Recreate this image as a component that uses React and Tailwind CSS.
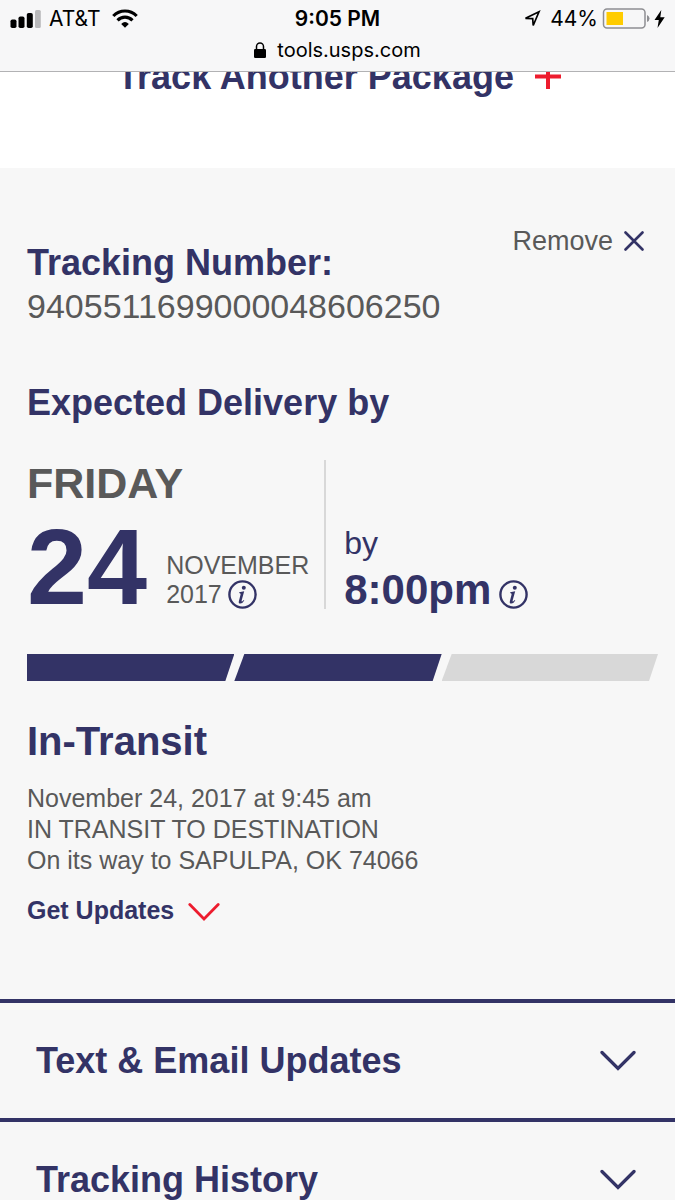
import React from "react";

function Chevron({ className, size = "large" }) {
  return size === "large" ? (
    <svg width="36" height="22" viewBox="0 0 36 22" fill="none" stroke="currentColor" strokeWidth="3.3" strokeLinecap="round" className={className} aria-hidden="true">
      <path d="M2 2.5 18 18.500 34 2.5" />
    </svg>
  ) : (
    <svg width="32" height="20" viewBox="0 0 32 20" fill="none" stroke="currentColor" strokeWidth="2.8" strokeLinecap="round" className={className} aria-hidden="true">
      <path d="M1.800 2.500 16 17 30.200 2.500" />
    </svg>
  );
}

function InfoButton({ label }) {
  return (
    <button type="button" aria-label={label} className="block shrink-0 text-[#333366]">
      <svg width="29" height="29" viewBox="0 0 29 29" aria-hidden="true">
        <circle cx="14.500" cy="14.500" r="13.100" fill="none" stroke="currentColor" strokeWidth="2.400" />
        <circle cx="15.800" cy="7.700" r="2" fill="currentColor" />
        <path d="M11.300 12.200q2.300-.2 4.900-.9l-2.500 9q-.3 1.300.3 1.200.7-.1 1.700-1.500l.6.400q-1.900 3.200-4 3.200-2.100 0-1.400-2.700l1.700-6.300q.3-1.400-1.500-1.500z" fill="currentColor" />
      </svg>
    </button>
  );
}

function BrowserHeader() {
  return (
    <header className="h-[72px] border-b border-[#b2b2b4] bg-[#f7f7f8] px-[10px] pt-1 font-['Inter','Liberation_Sans',sans-serif] text-black">
      <div className="grid grid-cols-[1fr_auto_1fr] items-center leading-7">
        <div className="flex items-center gap-2 text-[21px]">
          <svg width="31" height="18" viewBox="0 0 31 18" aria-label="Signal strength">
            <rect x="0.500" y="9.500" width="6" height="8.500" rx="1.800" />
            <rect x="8.500" y="6.500" width="6" height="11.500" rx="1.800" />
            <rect x="16.800" y="3" width="6" height="15" rx="1.800" />
            <rect x="25" y="0" width="5.800" height="18" rx="1.500" fill="#b9b9bb" />
          </svg>
          <span>AT&amp;T</span>
          <svg width="26" height="19" viewBox="0 0 26 19" fill="none" stroke="black" strokeWidth="3.200" className="ml-1" aria-label="Wi-Fi">
            <path d="M1.300 7Q6.200 2 13 2t11.700 5" />
            <path d="M5.500 11.300Q8.700 8.200 13 8.200t7.500 3.100" />
            <path d="M9.200 14.900Q13 11.300 16.800 14.900L13 18.700z" fill="black" stroke="none" />
          </svg>
        </div>
        <span className="pt-px text-[21px] font-semibold">9:05 PM</span>
        <div className="flex items-center justify-end text-[21px]">
          <svg width="18" height="18" viewBox="0 0 18 18" fill="none" stroke="black" strokeWidth="1.700" strokeLinejoin="miter" className="mr-[9px]" aria-label="Location">
            <path d="M16 1.800 2.500 8.300 9.700 8.600 10.200 15.500z" />
          </svg>
          <span>44%</span>
          <svg width="48" height="21" viewBox="0 0 48 21" className="ml-1" aria-label="Battery">
            <rect x="1.500" y="1" width="41.500" height="19" rx="3.500" fill="none" stroke="#8e8e92" strokeWidth="1.500" />
            <rect x="4.500" y="4" width="16.500" height="13" fill="#ffcc00" />
            <path d="M45 7q2.500 1 2.500 3.500T45 14z" fill="#8e8e92" />
          </svg>
          <svg width="11" height="18" viewBox="0 0 11 18" className="ml-1" aria-label="Charging">
            <path d="M7.300 0 .5 10h4.300L3.500 18 10.700 7.300H6.300z" />
          </svg>
        </div>
      </div>
      <div className="flex items-center justify-center gap-[11px] text-xl leading-[34px]">
        <svg width="12" height="16" viewBox="0 0 12 16" aria-label="Secure">
          <rect x="0" y="7" width="12" height="9" rx="1.200" />
          <path d="M2.500 8V4.500a3.500 3.500 0 0 1 7 0V8" fill="none" stroke="black" strokeWidth="1.500" />
        </svg>
        <span>tools.usps.com</span>
      </div>
    </header>
  );
}

function AccordionRow({ title }) {
  return (
    <section className="border-t-4 border-[#333366]">
      <h2>
        <button type="button" aria-expanded="false" className="flex w-full items-center justify-between py-[37px] pr-[39px] pl-9 text-left text-4xl leading-[41px] font-bold">
          {title}
          <Chevron />
        </button>
      </h2>
    </section>
  );
}

export default function App() {
  return (
    <div className="min-h-screen bg-[#f7f7f7] font-['Liberation_Sans',Arial,sans-serif] text-[#333366]">
      <BrowserHeader />
      <div className="overflow-hidden bg-white pb-[71px]">
        <a href="#track" className="-mt-[15px] flex items-center justify-center gap-5 pl-1 text-4xl leading-10 font-bold">
          Track Another Package
          <svg width="28" height="28" viewBox="0 0 28 28" stroke="#ed1c2e" strokeWidth="4" aria-hidden="true">
            <path d="M14 1v25M1 13.500h26" />
          </svg>
        </a>
      </div>

      <main>
        <section className="px-[27px] pt-[57px] pb-[73px]">
          <div className="flex items-start justify-between">
            <div className="pt-[18px]">
              <h1 className="text-4xl leading-10 font-bold">Tracking Number:</h1>
              <p className="text-[34px] leading-[46px] text-[#595959]">9405511699000048606250</p>
            </div>
            <button type="button" className="mr-1 flex items-center gap-[11px] text-[27px] leading-8 text-[#595959]">
              Remove
              <svg width="20" height="20" viewBox="0 0 20 20" stroke="#333366" strokeWidth="2.600" strokeLinecap="round" aria-hidden="true">
                <path d="M1.500 1.500l17 17M18.500 1.500l-17 17" />
              </svg>
            </button>
          </div>

          <h2 className="mt-[54px] text-4xl leading-10 font-bold">Expected Delivery by</h2>

          <div className="mt-[37px] flex">
            <div className="border-r-2 border-[#d8d8d8] pr-[15px]">
              <p className="text-[43px] leading-[46px] font-bold text-[#595959]">FRIDAY</p>
              <div className="flex h-[103px] items-end gap-[19px]">
                <span className="text-[108px] leading-[85px] font-bold">24</span>
                <div className="text-[25px] leading-[29px] text-[#595959]">
                  <p>NOVEMBER</p>
                  <div className="flex items-center gap-[6px]">
                    <span>2017</span>
                    <InfoButton label="About the expected date" />
                  </div>
                </div>
              </div>
            </div>
            <div className="flex flex-col justify-end pl-[18px]">
              <p className="text-[32px] leading-[46px]">by</p>
              <div className="flex h-[43px] items-end gap-2">
                <span className="text-[42px] leading-[38px] font-bold">8:00pm</span>
                <InfoButton label="About the expected time" />
              </div>
            </div>
          </div>

          <div role="progressbar" aria-label="Delivery progress" aria-valuemin="0" aria-valuemax="3" aria-valuenow="2" className="mt-[45px] -mr-[10px] flex h-[27px]">
            <div className="flex-[207] bg-[#333366] [clip-path:polygon(0_0,100%_0,calc(100%-9px)_100%,0_100%)]" />
            <div className="flex-[207] bg-[#333366] [clip-path:polygon(10px_0,100%_0,calc(100%-9px)_100%,0_100%)]" />
            <div className="flex-[216] bg-[#d8d8d8] [clip-path:polygon(10px_0,100%_0,calc(100%-9px)_100%,0_100%)]" />
          </div>

          <h2 className="mt-[37px] text-[40px] leading-[46px] font-bold">In-Transit</h2>
          <div className="mt-[19px] text-[25px] leading-[31px] text-[#595959]">
            <p>November 24, 2017 at 9:45 am</p>
            <p>IN TRANSIT TO DESTINATION</p>
            <p>On its way to SAPULPA, OK 74066</p>
          </div>
          <button type="button" className="mt-[18px] flex items-center gap-[14px] text-[25px] leading-8 font-bold">
            Get Updates
            <Chevron size="small" className="mt-1 text-[#ed1c2e]" />
          </button>
        </section>

        <AccordionRow title="Text &amp; Email Updates" />
        <AccordionRow title="Tracking History" />
      </main>
    </div>
  );
}
